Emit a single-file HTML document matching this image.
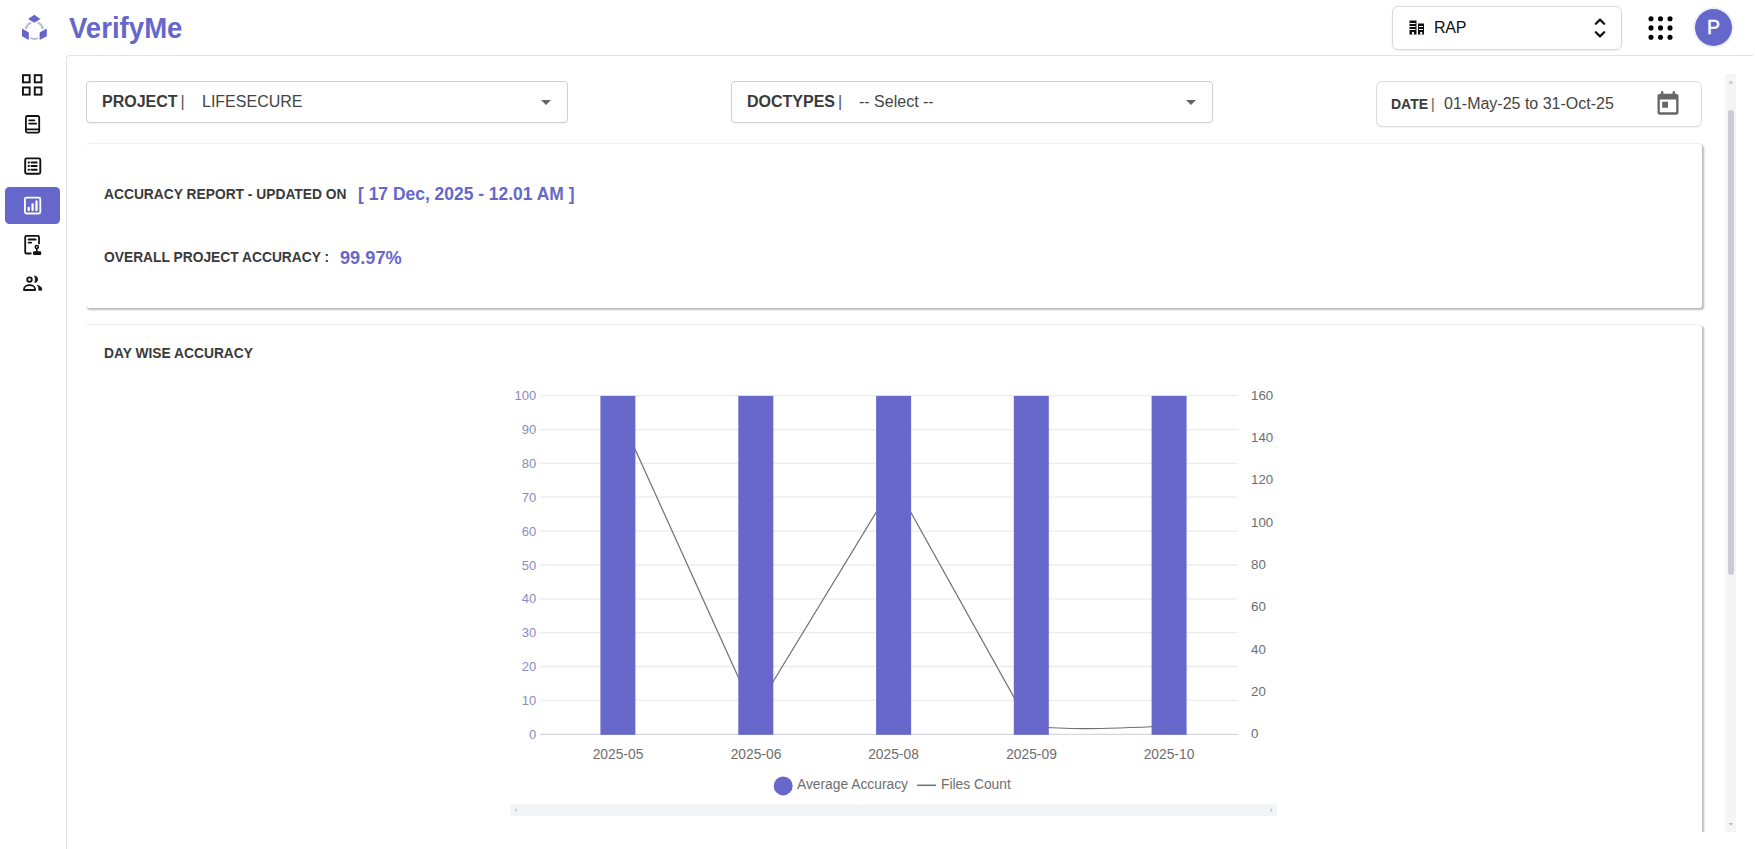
<!DOCTYPE html>
<html lang="en">
<head>
<meta charset="utf-8">
<title>VerifyMe</title>
<style>
*{box-sizing:border-box;margin:0;padding:0}
html,body{width:1755px;height:849px;overflow:hidden;background:#fff;font-family:"Liberation Sans",Arial,sans-serif;color:#333}
.abs{position:absolute}
#header{position:absolute;left:0;top:0;width:1755px;height:55px;background:#fff}
#main{position:absolute;left:66px;top:55px;width:1687px;height:800px;border-left:1px solid #e3e3e6;border-top:1px solid #e3e3e6;border-top-left-radius:4px}
#brand{position:absolute;left:69.3px;top:10.1px;font-size:29px;font-weight:700;color:#6667cb;line-height:36px;transform:scaleX(.951);transform-origin:0 0;white-space:nowrap}
#org{position:absolute;left:1392px;top:5.5px;width:230px;height:44px;border:1px solid #d9d9dc;border-radius:6px;box-shadow:0 1px 2px rgba(0,0,0,.08)}
#org .t{position:absolute;left:41px;top:11px;font-size:16px;line-height:20px;color:#111;letter-spacing:-0.3px}
#avatar{position:absolute;left:1695px;top:9px;width:37px;height:37px;border-radius:50%;background:#6667cb;color:#fff;font-size:19.5px;line-height:37px;text-align:center;-webkit-text-stroke:0.4px #fff;box-shadow:0 0 0 2px #f0f0fa}
#side{display:none}
#active{position:absolute;left:5px;top:186.5px;width:54.5px;height:37.4px;border-radius:4.500px;background:#6667cb}
.sel{position:absolute;top:81px;height:42px;border:1px solid #d1d1d4;border-radius:4px;background:#fff;box-shadow:0 1px 1px rgba(0,0,0,.05)}
.sel b{position:absolute;top:11px;font-size:16px;line-height:18px;color:#3a3a3a;font-weight:700;white-space:nowrap}
.sel i{font-style:normal;font-weight:400;color:#555;margin-left:3px}
.sel span{position:absolute;top:11px;font-size:16px;line-height:18px;color:#444;white-space:nowrap}
.caret{position:absolute;width:0;height:0;border-left:5.300px solid transparent;border-right:5.300px solid transparent;border-top:5.600px solid #666}
.card{position:absolute;left:86px;width:1616px;background:#fff;border-radius:3px;box-shadow:1.5px 1.5px 2px rgba(0,0,0,.27),0 -1px 1px rgba(0,0,0,.06);clip-path:inset(-6px -6px -6px 0)}
.lbl{position:absolute;font-size:13.8px;font-weight:700;color:#3a3a3a;white-space:nowrap;line-height:16px}
.val{position:absolute;font-size:17.6px;font-weight:700;color:#6667cb;white-space:nowrap;line-height:20px}
#clip{position:absolute;left:67px;top:74px;width:1670px;height:758px;overflow:hidden}
#track{position:absolute;left:1725px;top:74px;width:11px;height:758px;background:#f4f5f7}
#thumb{position:absolute;left:1728px;top:110px;width:6px;height:465px;background:#c9ccd1;border-radius:3px}
svg text{font-family:"Liberation Sans",Arial,sans-serif}
</style>
</head>
<body>
<div id="header">
  <svg class="abs" style="left:18px;top:10px" width="34" height="34" viewBox="18 10 34 34">
    <circle cx="34.4" cy="30.4" r="8.6" fill="none" stroke="#b9bad8" stroke-width="2"/>
    <g fill="#fff" stroke="#fff" stroke-width="3">
      <polygon points="34.3,14.8 40.4,18.9 34.3,22.8 28.1,18.9"/>
      <polygon points="22,28.6 28.8,32.4 28.8,39.9 22,36.2"/>
      <polygon points="46.8,28.6 39.6,32.4 39.6,39.9 46.8,36.2"/>
    </g>
    <g fill="#6466c9">
      <polygon points="34.3,14.8 40.4,18.9 34.3,22.8 28.1,18.9"/>
      <polygon points="22,28.6 28.8,32.4 28.8,39.9 22,36.2"/>
      <polygon points="46.8,28.6 39.6,32.4 39.6,39.9 46.8,36.2"/>
    </g>
  </svg>
  <div id="brand">VerifyMe</div>
  <div id="org">
    <svg class="abs" style="left:16px;top:13.500px" width="16" height="15" viewBox="0 0 16 15">
      <g fill="#111">
        <rect x="0.5" y="0.5" width="7" height="14"/>
        <rect x="9" y="3.5" width="6" height="11"/>
      </g>
      <g fill="#fff">
        <rect x="0.5" y="3" width="6" height="1"/><rect x="0.5" y="6" width="6" height="1"/><rect x="0.5" y="9" width="6" height="1"/>
        <rect x="10" y="6" width="4" height="1"/><rect x="10" y="9" width="4" height="1"/>
        <rect x="3" y="12" width="2" height="2.5"/><rect x="11.2" y="12" width="2" height="2.5"/>
      </g>
    </svg>
    <div class="t">RAP</div>
    <svg class="abs" style="left:198.500px;top:9px" width="16" height="24" viewBox="0 0 16 24">
      <path d="M3.800 7.800 L8 3.600 L12.200 7.800 M3.800 16.200 L8 20.400 L12.200 16.200" fill="none" stroke="#111" stroke-width="2.200" stroke-linecap="round" stroke-linejoin="round"/>
    </svg>
  </div>
  <svg class="abs" style="left:1646px;top:14px" width="30" height="28" viewBox="0 0 30 28">
    <g fill="#000">
      <circle cx="5" cy="4.7" r="2.55"/><circle cx="14.5" cy="4.7" r="2.55"/><circle cx="24" cy="4.7" r="2.55"/>
      <circle cx="5" cy="13.9" r="2.55"/><circle cx="14.5" cy="13.9" r="2.55"/><circle cx="24" cy="13.9" r="2.55"/>
      <circle cx="5" cy="23.2" r="2.55"/><circle cx="14.5" cy="23.2" r="2.55"/><circle cx="24" cy="23.2" r="2.55"/>
    </g>
  </svg>
  <div id="avatar">P</div>
</div>

<div id="main"></div>
<div id="active"></div>
<!-- sidebar icons -->
<svg class="abs" style="left:0;top:56px" width="66" height="260" viewBox="0 56 66 260" fill="none" stroke="#111" stroke-linecap="round" stroke-linejoin="round">
  <!-- dashboard grid -->
  <g stroke-width="1.9" stroke-linejoin="miter" stroke-linecap="butt">
    <rect x="22.95" y="75.15" width="6.7" height="7.2"/><rect x="34.75" y="75.15" width="6.7" height="7.2"/>
    <rect x="22.95" y="87.45" width="6.7" height="7.2"/><rect x="34.75" y="87.45" width="6.7" height="7.2"/>
  </g>
  <!-- book -->
  <g stroke-width="1.8">
    <path d="M25.9 117.500 a1.500 1.500 0 0 1 1.500 -1.500 h10.300 a1.500 1.500 0 0 1 1.500 1.500 v13.600 a1.500 1.500 0 0 1 -1.500 1.500 h-10.300 a1.500 1.500 0 0 1 -1.500 -1.500 z"/>
    <path d="M25.900 129.300 h13.300"/><path d="M29.200 120.300 h5.200 M29.200 123.600 h7"/>
  </g>
  <!-- list -->
  <g stroke-width="1.9">
    <rect x="25.200" y="158.400" width="15.100" height="15.400" rx="1.500"/>
    <path d="M31.500 162.500 h5.200 M31.500 166.100 h5.200 M31.500 169.700 h5.200 M28.600 162.500 h0.400 M28.600 166.100 h0.400 M28.600 169.700 h0.400" stroke-width="2"/>
  </g>
  <!-- bar chart (active) -->
  <g stroke="#fff" stroke-width="1.800">
    <rect x="24.900" y="197.700" width="15.400" height="15.800" rx="1.500"/>
    <path d="M28.700 210 v-2.200 M32.600 210 v-5.600 M36.500 210 v-8.600" stroke-width="2.300"/>
  </g>
  <!-- doc with stamp -->
  <g stroke-width="1.8">
    <path d="M30.800 253.500 h-4.400 a1.200 1.200 0 0 1 -1.200 -1.200 v-15.300 a1.200 1.200 0 0 1 1.200 -1.200 h11.400 a1.200 1.200 0 0 1 1.200 1.200 v6.600"/>
    <path d="M28.600 239.500 h7 M28.600 242.600 h2.600" stroke-width="1.900"/>
    <circle cx="36.800" cy="247" r="1.550" stroke-width="1.600"/>
    <path d="M36.800 249 v2.500" stroke-width="1.600"/>
    <rect x="33.800" y="252.100" width="6.700" height="2.200" rx="0.400" fill="#111" stroke-width="1.500"/>
  </g>
  <!-- people -->
  <g stroke-width="1.800">
    <circle cx="29.500" cy="279.600" r="2.300"/>
    <path d="M24 290 v-0.800 c0 -2.600 2.800 -4.100 5.550 -4.100 s5.550 1.500 5.550 4.100 v0.800 z"/>
    <path d="M34.900 276.100 a3.300 3.300 0 0 1 0 6.500 a10 10 0 0 0 0 -6.500 z" fill="#111" stroke-width="0.800"/>
    <path d="M37.400 285.300 c2.600 0.600 4.400 2 4.400 4 v1 h-3 v-1 c0 -1.600 -0.500 -2.900 -1.400 -4 z" fill="#111" stroke-width="0.600"/>
  </g>
</svg>

<div id="clip">
<div style="position:absolute;left:-67px;top:-74px;width:1755px;height:849px">
  <div class="sel" style="left:86px;width:482px"><b style="left:15px">PROJECT<i>|</i></b><span style="left:115px">LIFESECURE</span><div class="caret" style="left:453.600px;top:17.600px"></div></div>
  <div class="sel" style="left:731px;width:482px"><b style="left:15px">DOCTYPES<i>|</i></b><span style="left:127px">-- Select --</span><div class="caret" style="left:453.600px;top:17.600px"></div></div>
  <div class="sel" style="left:1376px;width:326px;height:46px;border-color:#dcdcdf;border-radius:6px"><b style="left:14px;top:12.700px;font-size:14px">DATE<i>|</i></b><span style="left:67px;top:13.300px">01-May-25 to 31-Oct-25</span>
    <svg class="abs" style="left:277px;top:7px" width="28" height="28" viewBox="0 0 24 24" fill="#666"><path d="M19 4h-1V2h-2v2H8V2H6v2H5c-1.100 0-2 .9-2 2v14c0 1.100.9 2 2 2h14c1.100 0 2-.9 2-2V6c0-1.100-.9-2-2-2zm0 16H5V9h14v11zM7 11h5v5H7z"/></svg>
  </div>

  <div class="card" style="top:144px;height:164px">
    <div class="lbl" style="left:18px;top:42.600px">ACCURACY REPORT - UPDATED ON</div>
    <div class="val" style="left:272px;top:39.800px;font-size:17.450px">[ 17 Dec, 2025 - 12.01 AM ]</div>
    <div class="lbl" style="left:18px;top:106px">OVERALL PROJECT ACCURACY :</div>
    <div class="val" style="left:254px;top:103.800px;font-size:18.200px">99.97%</div>
  </div>

  <div class="card" style="top:325px;height:560px">
    <div class="lbl" style="left:18px;top:20.8px">DAY WISE ACCURACY</div>
  </div>

  <svg class="abs" style="left:0;top:0" width="1755" height="849" viewBox="0 0 1755 849">
    <g stroke="#ececee" stroke-width="1.3">
      <line x1="540" x2="1238" y1="395.7" y2="395.7"/>
      <line x1="540" x2="1238" y1="429.6" y2="429.6"/>
      <line x1="540" x2="1238" y1="463.4" y2="463.4"/>
      <line x1="540" x2="1238" y1="497.2" y2="497.2"/>
      <line x1="540" x2="1238" y1="531.1" y2="531.1"/>
      <line x1="540" x2="1238" y1="565.0" y2="565.0"/>
      <line x1="540" x2="1238" y1="598.8" y2="598.8"/>
      <line x1="540" x2="1238" y1="632.6" y2="632.6"/>
      <line x1="540" x2="1238" y1="666.5" y2="666.5"/>
      <line x1="540" x2="1238" y1="700.4" y2="700.4"/>
    </g>
    <line x1="540" x2="1238" y1="734.4" y2="734.4" stroke="#d6d6de" stroke-width="1.3"/>
    <g fill="none" stroke="#707070" stroke-width="1.2">
      <path d="M618.2 411.9 L756.1 716.4"/>
      <path d="M756.1 709.5 L893.5 483.9"/>
      <path d="M893.5 481.3 L1031.5 728.8"/>
      <path d="M1031.5 727 Q1060 728.4 1083.4 728.6 T1169 726"/>
    </g>
    <g fill="#6868cb">
      <rect x="600.4" y="395.9" width="35" height="338.9"/>
      <rect x="738.3" y="395.9" width="35" height="338.9"/>
      <rect x="876.1" y="395.9" width="35" height="338.9"/>
      <rect x="1013.8" y="395.9" width="35" height="338.9"/>
      <rect x="1151.6" y="395.9" width="35" height="338.9"/>
    </g>
    <g font-size="13" fill="#8a8bc2" text-anchor="end"><text x="536.3" y="400.2">100</text><text x="536.3" y="434.1">90</text><text x="536.3" y="467.9">80</text><text x="536.3" y="501.8">70</text><text x="536.3" y="535.6">60</text><text x="536.3" y="569.5">50</text><text x="536.3" y="603.3">40</text><text x="536.3" y="637.1">30</text><text x="536.3" y="671.0">20</text><text x="536.3" y="704.9">10</text><text x="536.3" y="738.7">0</text></g>
    <g font-size="13.3" fill="#6e6e6e"><text x="1251" y="399.6">160</text><text x="1251" y="441.9">140</text><text x="1251" y="484.2">120</text><text x="1251" y="526.5">100</text><text x="1251" y="568.9">80</text><text x="1251" y="611.2">60</text><text x="1251" y="653.5">40</text><text x="1251" y="695.8">20</text><text x="1251" y="738.1">0</text></g>
    <g font-size="13.8" fill="#6e6e6e" text-anchor="middle"><text x="618" y="759.3">2025-05</text><text x="756" y="759.3">2025-06</text><text x="893.5" y="759.3">2025-08</text><text x="1031.5" y="759.3">2025-09</text><text x="1169" y="759.3">2025-10</text></g>
    <circle cx="783.2" cy="785.9" r="9.5" fill="#6868cb"/>
    <text x="797" y="789.2" font-size="13.8" fill="#6e6e6e">Average Accuracy</text>
    <line x1="917" x2="936" y1="785.3" y2="785.3" stroke="#707070" stroke-width="1.5"/>
    <text x="941" y="789.2" font-size="13.8" fill="#6e6e6e">Files Count</text>
    <rect x="510" y="804.500" width="767" height="11.500" fill="#f3f4f6"/>
    <path d="M516.5 808 l-2 2.3 l2 2.3 z M1270.5 808 l2 2.3 l-2 2.3 z" fill="#c4c6cc"/>
  </svg>
</div>
</div>
<div id="track"></div>
<div id="thumb"></div>
<svg class="abs" style="left:1725px;top:74px" width="11" height="758" viewBox="0 0 11 758"><path d="M3.500 9.500 l2.300 -2.800 l2.300 2.800 z M3.500 749 l2.300 2.800 l2.300 -2.800 z" fill="#b9bcc3"/></svg>
</body>
</html>
